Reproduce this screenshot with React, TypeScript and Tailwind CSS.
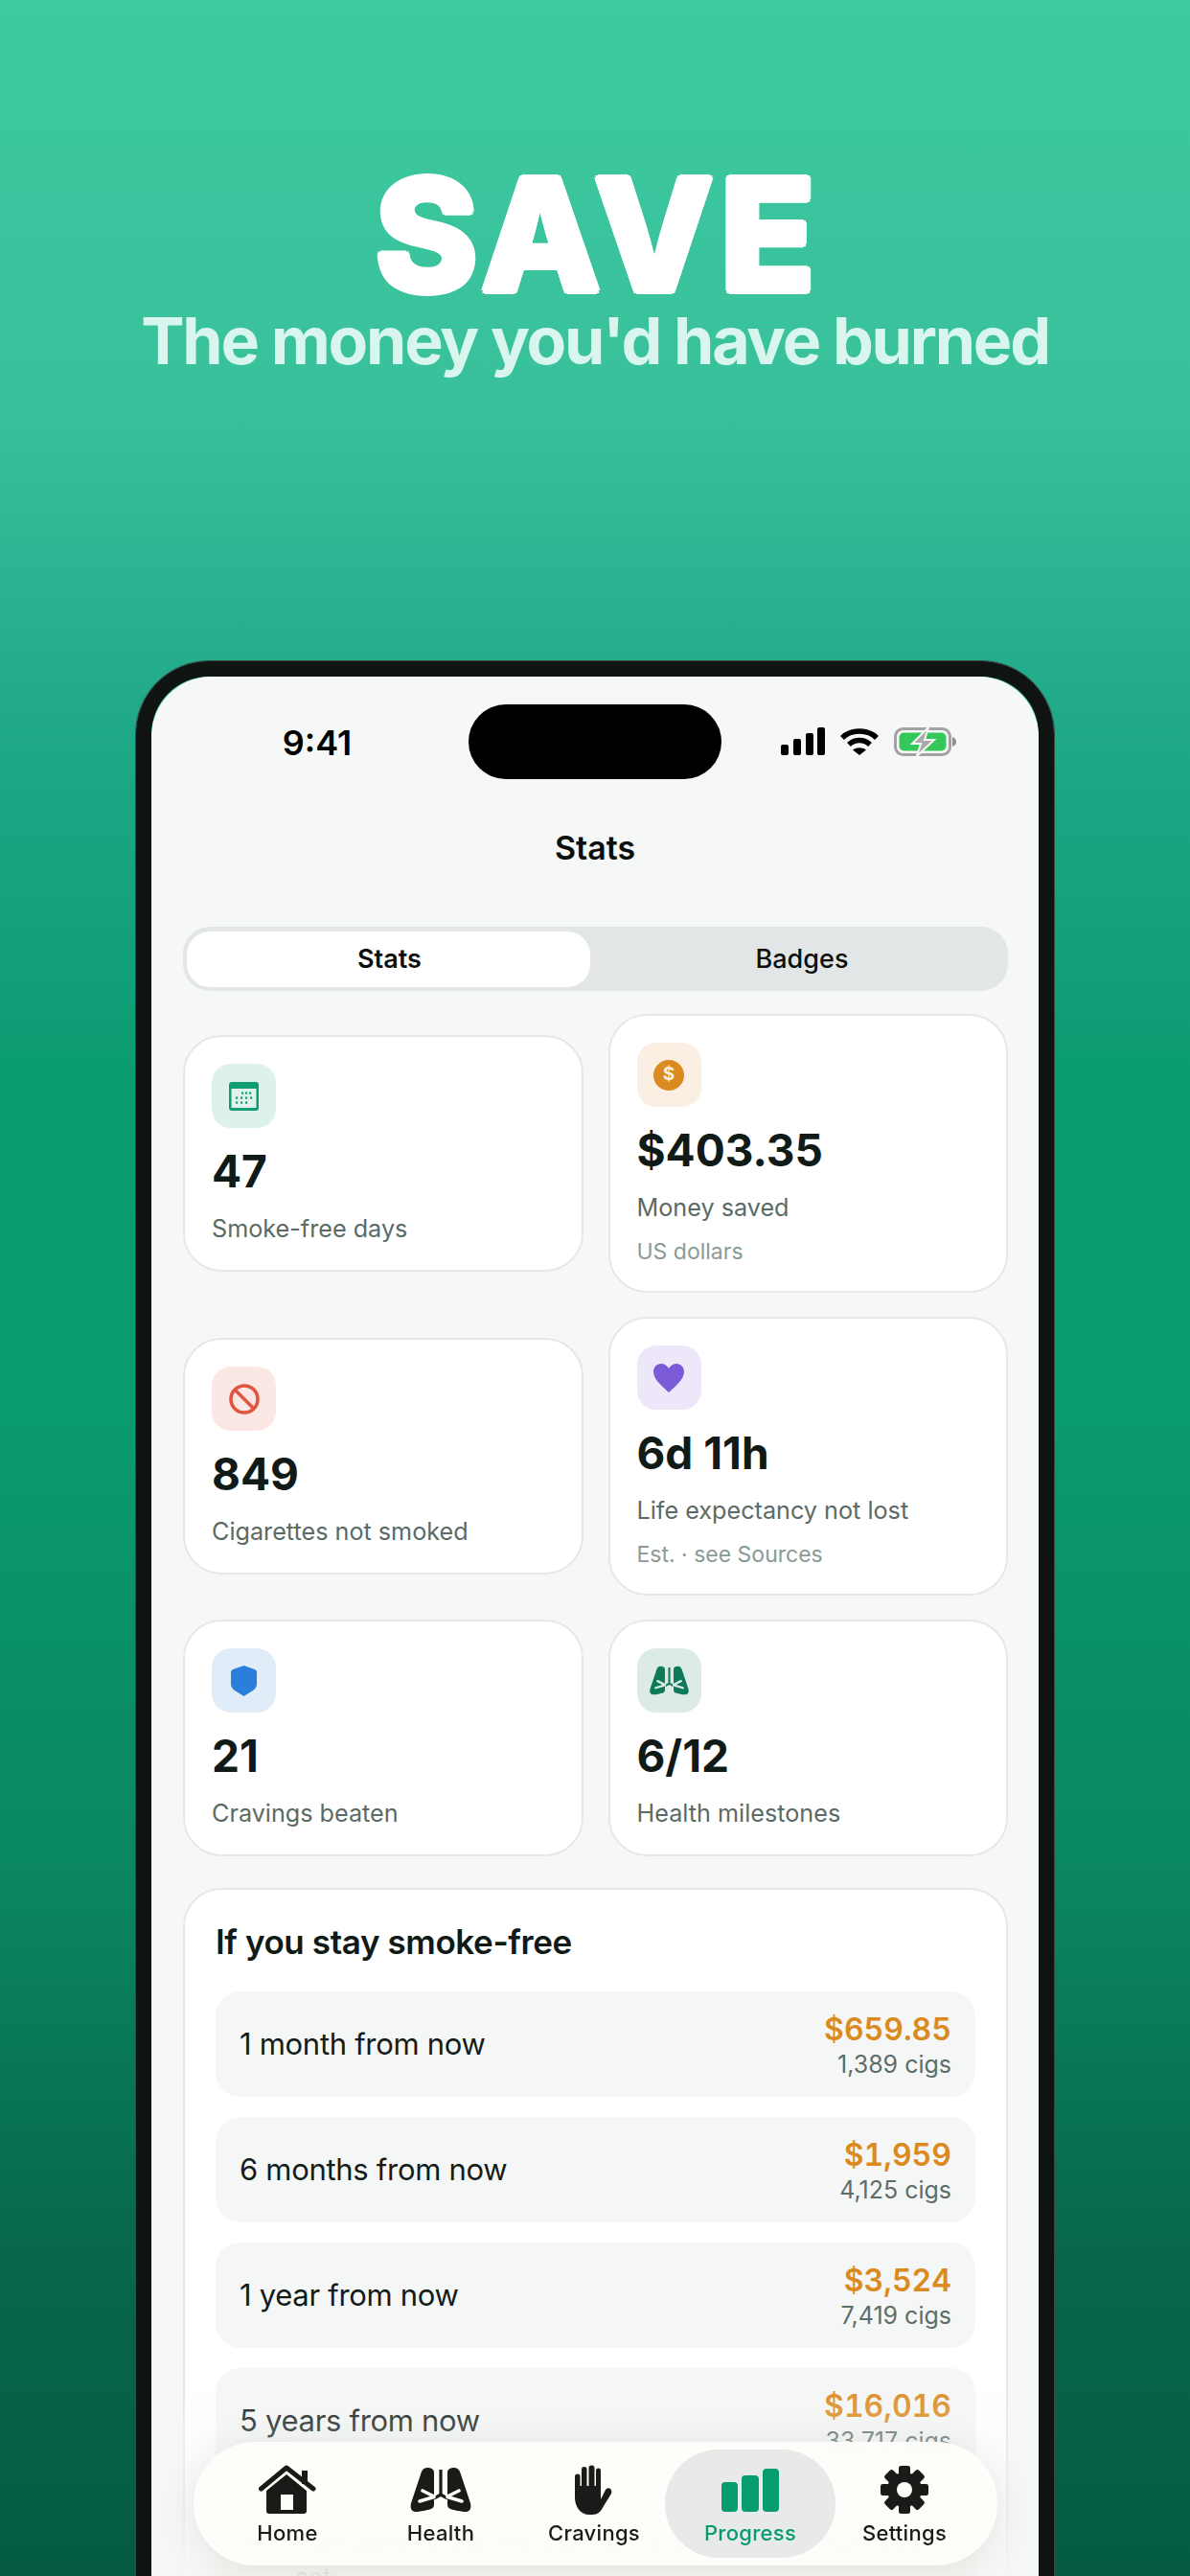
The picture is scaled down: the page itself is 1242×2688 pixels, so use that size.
import React from "react";

const LungsIcon = ({ color, gap, className }: { color: string; gap: string; className: string }) => (
  <svg viewBox="0 0 64 48" className={className}>
    <path
      d="M25 6C25 2 21 1 18 1C14 1 12 4 11 8L1 38C0 43 1 46 5 47C11 47 18 45 22 44C24 43 25 42 25 39Z"
      fill={color}
    />
    <path
      d="M39 6C39 2 43 1 46 1C50 1 52 4 53 8L63 38C64 43 63 46 59 47C53 47 46 45 42 44C40 43 39 42 39 39Z"
      fill={color}
    />
    <path d="M32 3V29M24 33C28 32 30 30 32 29C34 30 36 32 40 33" stroke={color} strokeWidth="3.2" fill="none" />
    <path
      d="M25 31L13 25M25 31.5L10 36M39 31L51 25M39 31.5L54 36"
      stroke={gap}
      strokeWidth="3.6"
      strokeLinecap="round"
      fill="none"
    />
  </svg>
);

const HomeIcon = () => (
  <svg viewBox="0 0 60 52" className="h-[52px] w-[60px]">
    <path d="M45 6H51V20H45Z" fill="#1a1a18" />
    <path d="M2.5 25L29 3L57 25" stroke="#1a1a18" strokeWidth="5" strokeLinecap="round" strokeLinejoin="round" fill="none" />
    <path
      fillRule="evenodd"
      d="M29 10L50 27V48C50 50 49 51 47 51H11C9 51 8 50 8 48V27ZM23 31V47H36V31Z"
      fill="#1a1a18"
    />
  </svg>
);

const HandIcon = () => (
  <svg viewBox="0 0 40 52" className="h-[52px] w-[40px]">
    <g fill="#1a1a18">
      <rect x="0" y="9.500" width="5.500" height="24" rx="2.750" />
      <rect x="7" y="2" width="5.500" height="30" rx="2.750" />
      <rect x="14.500" y="0.500" width="6" height="32" rx="3" />
      <rect x="22" y="3.500" width="5" height="29" rx="2.500" />
      <path d="M0 22V34C0 44 6 52 15 52H18C24 52 27 49 30 43L38 30C39 28 38 25 36 24.500C34 24 32.500 25 31.500 27L27 36V22Z" />
    </g>
  </svg>
);

const BarsIcon = () => (
  <div className="flex h-[52px] items-end gap-[4px] pb-[3px]">
    <div className="h-[31px] w-[17px] rounded-[4px] bg-[#069c6f]" />
    <div className="h-[38px] w-[18px] rounded-[4px] bg-[#069c6f]" />
    <div className="h-[45px] w-[17px] rounded-[4px] bg-[#069c6f]" />
  </div>
);

const GearIcon = () => (
  <svg viewBox="0 0 52 52" className="h-[52px] w-[52px]">
    {[0, 45, 90, 135, 180, 225, 270, 315].map((deg) => (
      <rect key={deg} x="20" y="1" width="12" height="14" rx="2.5" fill="#1a1a18" transform={`rotate(${deg} 26 26)`} />
    ))}
    <circle cx="26" cy="26" r="18" fill="#1a1a18" />
    <circle cx="26" cy="26" r="8" fill="#fdfdfa" />
  </svg>
);

const CalendarIcon = () => (
  <svg viewBox="0 0 31 30" className="h-[30px] w-[31px]">
    <rect width="31" height="30" rx="3" fill="#0f9d73" />
    <rect x="2.5" y="7" width="26" height="20" fill="#dff2ec" />
    <g fill="#0f9d73">
      {[13, 17, 21].map((x) => (
        <rect key={x} x={x} y="10.5" width="2.2" height="2.2" />
      ))}
      {[7, 12, 17, 22].map((x) => (
        <rect key={x} x={x} y="15.5" width="2.2" height="2.2" />
      ))}
      {[7, 12, 17].map((x) => (
        <rect key={x} x={x} y="20.5" width="2.2" height="2.2" />
      ))}
    </g>
  </svg>
);

const DollarIcon = () => (
  <div className="flex h-[32px] w-[32px] items-center justify-center rounded-full bg-[#d98a20] text-[19px] font-bold text-[#fdeeda]">$</div>
);

const BanIcon = () => (
  <svg viewBox="0 0 32 32" className="h-[32px] w-[32px]">
    <circle cx="16" cy="16" r="14" stroke="#e0553f" strokeWidth="3.6" fill="none" />
    <path d="M6.5 6.5L25.5 25.5" stroke="#e0553f" strokeWidth="3.6" />
  </svg>
);

const HeartIcon = () => (
  <svg viewBox="0 0 32 30" className="h-[30px] w-[32px]">
    <path d="M16 30C11 25 0 17 0 8.5C0 3.5 3.5 0 8 0C11.5 0 14.500 2 16 5C17.500 2 20.500 0 24 0C28.500 0 32 3.500 32 8.500C32 17 21 25 16 30Z" fill="#7c5bd6" />
  </svg>
);

const ShieldIcon = () => (
  <svg viewBox="0 0 27 32" className="h-[32px] w-[27px]">
    <path d="M13.500 0L25 4Q27 5 27 7V19Q27 23 23 26L13.500 32L4 26Q0 23 0 19V7Q0 5 2 4Z" fill="#2a7fdc" />
  </svg>
);

const cards = [
  { icon: <CalendarIcon />, tile: "bg-[#ddf2ec]", value: "47", label: "Smoke-free days" },
  { icon: <DollarIcon />, tile: "bg-[#fbefe3]", value: "$403.35", label: "Money saved", sub: "US dollars" },
  { icon: <BanIcon />, tile: "bg-[#fbe8e5]", value: "849", label: "Cigarettes not smoked" },
  { icon: <HeartIcon />, tile: "bg-[#eee7f9]", value: "6d 11h", label: "Life expectancy not lost", sub: "Est. · see Sources" },
  { icon: <ShieldIcon />, tile: "bg-[#e1ecf9]", value: "21", label: "Cravings beaten" },
  {
    icon: <LungsIcon color="#0e7a5a" gap="#dcebe6" className="h-[31px] w-[43px]" />,
    tile: "bg-[#dcebe6]",
    value: "6/12",
    label: "Health milestones",
  },
];

const projections = [
  { label: "1 month from now", money: "$659.85", cigs: "1,389 cigs" },
  { label: "6 months from now", money: "$1,959", cigs: "4,125 cigs" },
  { label: "1 year from now", money: "$3,524", cigs: "7,419 cigs" },
  { label: "5 years from now", money: "$16,016", cigs: "33,717 cigs" },
];

const StatusIcons = () => (
  <div className="flex items-start pl-[62px] pt-[24px]">
    <svg viewBox="0 0 47 29" className="h-[29px] w-[47px]">
      <rect x="0" y="18" width="8" height="11" rx="2" />
      <rect x="13" y="12" width="8" height="17" rx="2" />
      <rect x="26" y="6" width="8" height="23" rx="2" />
      <rect x="38" y="0" width="8" height="29" rx="2" />
    </svg>
    <svg viewBox="0 0 40 29" className="ml-[15px] h-[29px] w-[40px]">
      <path d="M2 11C11 1.500 29 1.500 38 11" stroke="#000" strokeWidth="5.500" fill="none" />
      <path d="M9 18C15 12 25 12 31 18" stroke="#000" strokeWidth="5.500" fill="none" />
      <path d="M13 23.500C17 20.500 23 20.500 27 23.500L20 29Z" fill="#000" />
    </svg>
    <svg viewBox="0 0 65 30" className="ml-[16px] h-[30px] w-[65px]">
      <rect x="1.500" y="1.500" width="57" height="27" rx="8" stroke="#a3a3a3" strokeWidth="3" fill="none" />
      <rect x="5.500" y="5.500" width="49" height="19" rx="5" fill="#34c759" />
      <path d="M61 10C64 11 65 13 65 15C65 17 64 19 61 20Z" fill="#8f8f8f" />
      <path d="M36 0L19 17H28L24 30L42 13H32Z" fill="#a9a9a9" stroke="#f5f7f6" strokeWidth="2" />
    </svg>
  </div>
);

const StatCard = ({ card }: { card: (typeof cards)[number] }) => (
  <div className="rounded-[40px] border-2 border-[#e6e8e8] bg-white px-[28px] pb-[25px] pt-[28px]">
    <div className={`flex h-[67px] w-[67px] items-center justify-center rounded-[20px] ${card.tile}`}>{card.icon}</div>
    <div className="mt-[19px] text-[46px] font-bold leading-[52px] text-[#101a17]">{card.value}</div>
    <div className="mt-[16px] text-[25.2px] leading-[36px] text-[#5a6b66]">{card.label}</div>
    {card.sub && <div className="mt-[12px] text-[23px] leading-[32px] text-[#8a9a95]">{card.sub}</div>}
  </div>
);

const TabLabel = ({ children, active }: { children: React.ReactNode; active?: boolean }) => (
  <span className={`mt-[5px] text-[22px] font-medium leading-[28px] tracking-[0.3px] ${active ? "text-[#069c6f]" : "text-[#1a1a18]"}`}>
    {children}
  </span>
);

const TabBar = () => (
  <div className="absolute bottom-[11px] left-[44px] right-[43px] flex h-[129px] rounded-full bg-[#fdfdfa]/95 pl-[18px] pt-[8px] shadow-[0_6px_44px_rgba(0,0,0,0.09)] backdrop-blur-[3px]">
    <div className="flex h-[113px] w-[160px] flex-col items-center pt-[16px]">
      <HomeIcon />
      <TabLabel>Home</TabLabel>
    </div>
    <div className="flex h-[113px] w-[160px] flex-col items-center pt-[16px]">
      <LungsIcon color="#1a1a18" gap="#fdfdfa" className="h-[52px] w-[64px]" />
      <TabLabel>Health</TabLabel>
    </div>
    <div className="flex h-[113px] w-[160px] flex-col items-center pt-[16px]">
      <HandIcon />
      <TabLabel>Cravings</TabLabel>
    </div>
    <div className="-ml-[6px] flex h-[113px] w-[178px] flex-col items-center rounded-[56px] bg-[#e8eaea] pt-[16px]">
      <BarsIcon />
      <TabLabel active>Progress</TabLabel>
    </div>
    <div className="-ml-[8px] flex h-[113px] w-[160px] flex-col items-center pt-[16px]">
      <GearIcon />
      <TabLabel>Settings</TabLabel>
    </div>
  </div>
);

export default function App() {
  return (
    <div className="flex h-[2688px] w-[1242px] flex-col items-center overflow-hidden bg-[linear-gradient(180deg,#3dcaa0_0%,#38c09b_16%,#1fa988_28%,#0b9b70_42%,#0a9a70_55%,#0a8763_72%,#07664c_88%,#055b44_100%)] font-['Inter',sans-serif]">
      <h1 className="pl-[7px] pt-[172px] text-[162px] font-extrabold leading-[145px] tracking-[7px] text-white [text-shadow:3.500px_0_0_#fff,2.500px_2.500px_0_#fff,0_3.500px_0_#fff,-2.500px_2.500px_0_#fff,-3.500px_0_0_#fff,-2.500px_-2.500px_0_#fff,0_-3.500px_0_#fff,2.500px_-2.500px_0_#fff]">SAVE</h1>
      <p className="mt-[3px] text-[68px] font-bold leading-[70px] tracking-[-2.2px] text-[#d9f6ee]">The money you'd have burned</p>

      <div className="mt-[300px] h-[1998px] w-[958px] shrink-0 rounded-t-[76px] border-x-[16px] border-t-[16px] border-[#0f1311] outline outline-1 outline-[#3f4543]">
        <div className="relative h-full overflow-hidden rounded-t-[62px] bg-[#f6f8f7]">
          <div className="grid grid-cols-[1fr_264px_1fr] pt-[29px]">
            <div className="flex justify-center pl-[15px] pt-[15px] text-[36px] font-semibold leading-[50px] text-black">9:41</div>
            <div className="h-[78px] rounded-[39px] bg-black" />
            <StatusIcons />
          </div>

          <h2 className="mt-[50px] text-center text-[34px] font-semibold leading-[44px] text-[#0b0f0e]">Stats</h2>

          <div className="pl-[33px] pr-[32px]">
            <div className="mt-[60px] flex h-[67px] items-center rounded-[28px] bg-[#e3e6e7] p-[4px]">
              <div className="flex h-[58px] w-[421px] items-center justify-center rounded-[24px] bg-white pl-[2px] pt-[2px] text-[27px] font-semibold text-[#0b0f0e]">Stats</div>
              <div className="flex-1 pl-[10px] pt-[2px] text-center text-[27px] font-medium text-[#0b0f0e]">Badges</div>
            </div>

            <div className="mt-[24px] grid grid-cols-2 items-center gap-x-[26px] gap-y-[25px]">
              {cards.map((card) => (
                <StatCard key={card.label} card={card} />
              ))}
            </div>

            <section className="mt-[33px] rounded-[40px] border-2 border-[#e6e8e8] bg-white px-[32px] pt-[30px]">
              <h3 className="text-[35px] font-semibold leading-[48px] tracking-[-0.4px] text-[#101a17]">If you stay smoke-free</h3>
              <div className="mt-[28px] flex flex-col gap-[21px]">
                {projections.map((row) => (
                  <div key={row.label} className="flex h-[110px] items-center justify-between rounded-[26px] bg-[#f5f7f6] px-[25px]">
                    <span className="text-[31px] tracking-[-0.3px] text-[#141c19]">{row.label}</span>
                    <div className="pt-[3px] text-right">
                      <div className="text-[32px] font-semibold tabular-nums leading-[38px] text-[#db8a20]">{row.money}</div>
                      <div className="text-[25px] leading-[34px] text-[#5d6d68]">{row.cigs}</div>
                    </div>
                  </div>
                ))}
              </div>
              <div className="mt-[31px] flex gap-[25px] rounded-[26px] bg-[#fdf6e0] px-[28px] pt-[24px]">
                <div className="mt-[3px] h-[26px] w-[30px] shrink-0 rounded-full bg-[#f6cf6e]" />
                <div className="text-[26px] leading-[36px] text-[#5d6d68]">
                  <p>Calculations use the pack price and daily amount you set</p>
                  <p>All amounts are in US dollars</p>
                </div>
              </div>
            </section>
          </div>

          <div className="absolute inset-x-0 bottom-0 h-[210px] bg-gradient-to-b from-[#f5f7f6]/0 to-[#f5f7f6]/90" />
          <TabBar />
        </div>
      </div>
    </div>
  );
}
